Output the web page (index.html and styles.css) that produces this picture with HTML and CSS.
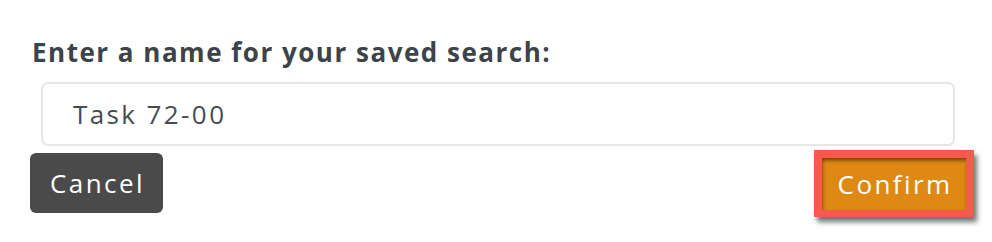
FILE: index.html
```html
<!DOCTYPE html>
<html>
<head>
<meta charset="utf-8">
<link rel="stylesheet" href="styles.css">
</head>
<body>
<div class="dialog">
  <label class="label" for="name">Enter a name for your saved search:</label>
  <div class="field"><span class="field-text">Task 72-00</span></div>
  <div class="actions">
    <button class="btn btn-cancel">Cancel</button>
    <button class="btn btn-confirm">Confirm</button>
  </div>
</div>
</body>
</html>
```
FILE: styles.css
```css
html, body {
  margin: 0;
  padding: 0;
  background: #ffffff;
}
body {
  width: 992px;
  height: 242px;
  overflow: hidden;
  font-family: "Open Sans", Lato, sans-serif;
}
.dialog {
  padding: 36px 18px 0 30px;
  display: flex;
  flex-direction: column;
}
.label {
  display: block;
  margin-left: 2px;
  font-size: 26px;
  font-weight: 700;
  letter-spacing: 1.5px;
  color: #3c4349;
  line-height: 32px;
  height: 32px;
}
.field {
  margin: 14px 19px 0 11px;
  height: 64px;
  box-sizing: border-box;
  border: 2px solid #e6e6e6;
  border-radius: 7px;
  display: flex;
  align-items: center;
  padding-left: 30px;
}
.field-text {
  font-size: 26px;
  letter-spacing: 2.4px;
  color: #454c53;
}
.actions {
  margin-top: 4px;
  display: flex;
  justify-content: space-between;
  align-items: flex-start;
}
.btn {
  font-family: inherit;
  border: none;
  color: #ffffff;
  font-size: 26px;
  letter-spacing: 2.4px;
  padding: 0 0 0 2px;
  cursor: pointer;
}
.btn-cancel {
  margin-top: 3px;
  width: 133px;
  height: 60px;
  background: #4a4a4a;
  border-radius: 6px;
}
.btn-confirm {
  width: 160px;
  height: 67px;
  box-sizing: border-box;
  border: 8px solid #f65a4d;
  border-bottom-width: 7px;
  background: #de8913;
  box-shadow: inset 1px 3px 4px -1px rgba(60, 30, 0, 0.75), 3px 5px 5px rgba(0, 0, 0, 0.55);
}
```
